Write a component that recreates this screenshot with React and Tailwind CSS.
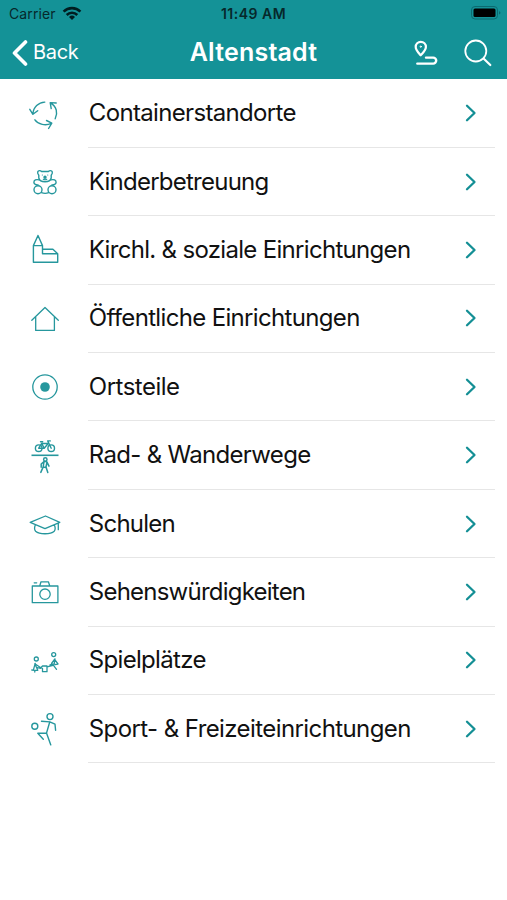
const rows = [
  { label: "Containerstandorte", icon: ContainerIcon, tracking: "tracking-[-0.66px]" },
  { label: "Kinderbetreuung", icon: BearIcon, tracking: "tracking-[-0.76px]" },
  { label: "Kirchl. & soziale Einrichtungen", icon: ChurchIcon, tracking: "tracking-[-0.69px]" },
  { label: "Öffentliche Einrichtungen", icon: HouseIcon, tracking: "tracking-[-0.66px]" },
  { label: "Ortsteile", icon: DistrictIcon, tracking: "tracking-[-0.5px]" },
  { label: "Rad- & Wanderwege", icon: TrailIcon, tracking: "tracking-[-0.69px]" },
  { label: "Schulen", icon: SchoolIcon, tracking: "tracking-[-0.75px]" },
  { label: "Sehenswürdigkeiten", icon: CameraIcon, tracking: "tracking-[-0.77px]" },
  { label: "Spielplätze", icon: PlaygroundIcon, tracking: "tracking-[-0.68px]" },
  { label: "Sport- & Freizeiteinrichtungen", icon: SportIcon, tracking: "tracking-[-0.59px]" },
];

function Icon({ children }) {
  return (
    <svg
      viewBox="0 0 50 50"
      className="ml-5 h-[50px] w-[50px] shrink-0 text-[#26979d]"
      fill="none"
      stroke="currentColor"
      strokeWidth="1.4"
      strokeLinecap="round"
      strokeLinejoin="round"
    >
      {children}
    </svg>
  );
}

function ContainerIcon() {
  return (
    <Icon>
      <path d="M24.8 13.1C18.5 13.500 13.300 18 12.900 25.100M9.800 20.300l3.100 5 4.800-3.600" />
      <path d="M35.200 29.800C38.200 24 36.500 17.300 30.600 14.200M36.200 14l-6-.4 1 6" />
      <path d="M14.900 30.800C18.200 35.500 25.500 37 31.300 34.400M26.500 31.500l5.300 2.600-3.200 5.400" />
    </Icon>
  );
}

function BearIcon() {
  return (
    <Icon>
      <path d="M18.800 18.200c-2-2.400-1.200-4.600.8-4.600 1.200 0 2 .9 2 .9h6.800s.8-.9 2-.9c2 0 2.800 2.200.8 4.600v2.800c-.6 2.400-2.800 3.800-6.200 3.800s-5.600-1.400-6.200-3.800z" />
      <path d="M19 22.900c-2.800-.8-5.200.2-5.100 2.500.1 2 2.200 2.600 4.200 2.500M31 22.900c2.800-.8 5.200.2 5.100 2.500-.1 2-2.200 2.600-4.200 2.500M21.500 35.700c2 .8 5.200.8 7.200 0" />
      <circle cx="18" cy="32.700" r="4" />
      <circle cx="32" cy="32.700" r="4" />
      <path strokeWidth="1.100" d="M22.300 18h.1M27.700 18h.1M23.300 22.300q1.800 1 3.500 0" />
      <circle cx="25" cy="20.200" r="1" fill="currentColor" />
    </Icon>
  );
}

function ChurchIcon() {
  return (
    <Icon>
      <path d="M13.400 20.600v16.600h24.300v-8.400l-4.800-4.500H22.500v-3.700L18 10.500l-4.600 10.100h9M22.500 24.300v4.500h15.200" />
    </Icon>
  );
}

function HouseIcon() {
  return (
    <Icon>
      <path strokeWidth="1.300" d="M11.800 26.300 25 13.500l13.300 12.800M15.700 22.800v13.600h18.700V22.800" />
    </Icon>
  );
}

function DistrictIcon() {
  return (
    <Icon>
      <circle cx="25" cy="25" r="12.200" strokeWidth="1.300" />
      <circle cx="25" cy="25" r="4.800" fill="currentColor" stroke="none" />
    </Icon>
  );
}

function TrailIcon() {
  return (
    <Icon>
      <g strokeWidth="1.400">
        <circle cx="18.700" cy="17.200" r="3.300" />
        <circle cx="31.200" cy="17.200" r="3.300" />
        <path d="M18.700 17.200l3-4.700h6.500l-4 4.700h-5.500M20.500 10.800h2.200M24.200 17.200l-2.500-4.700M31.200 17.200l-3.500-7.300h2.600" />
      </g>
      <path strokeWidth="1.600" strokeLinecap="butt" d="M11.500 24.300h27" />
      <g strokeWidth="1.500">
        <circle cx="25.300" cy="28.500" r="1.700" />
        <path d="M24 30.700l-2.800 2.300v3.200M24 30.700l-.8 5.200-2.400 5.500M27 31l-1 5 1.800 5.500M24 30.700q2.200-.8 3 .5l2 4M23.200 36l2.800.4" />
      </g>
    </Icon>
  );
}

function SchoolIcon() {
  return (
    <Icon>
      <path strokeWidth="1.300" d="M10.200 23.400 25.500 17l14.300 6.300-14.800 6.300zM15.300 26c-.9 2.300-1 4.800.3 6.300 3.800 3.300 15 3.300 18.600 0 1.300-1.500 1.100-4 .2-6.300M38.300 24.200v6.500" />
    </Icon>
  );
}

function CameraIcon() {
  return (
    <Icon>
      <path strokeWidth="1.300" d="M12.300 19h25.600v16.700H12.300zM19.800 18.800l1.200-4h7.400l1.300 4M14.200 15.800h2.500" />
      <circle cx="25" cy="27.200" r="5.200" strokeWidth="1.300" />
    </Icon>
  );
}

function PlaygroundIcon() {
  return (
    <Icon>
      <g strokeWidth="1.300">
        <circle cx="16.300" cy="23" r="2" />
        <circle cx="33.700" cy="18.600" r="2" />
        <path d="M15.200 27.300l-1.900 7h4.500l-3-6.500 5.700 3.700M11.800 34l3 .3v1.800M17 31.600l4 .8M20.500 32.300l2-2.300h4.500v5.700h-4.500v-3.400M27 30.800l6-1.500M35 23l-.8 4.800-4.200 1M34.500 23.300l-3 4.200M35 23.800l3 4.200-3 .7M33.500 29.300l3 4" />
      </g>
    </Icon>
  );
}

function SportIcon() {
  return (
    <Icon>
      <circle cx="30" cy="12.600" r="3" />
      <circle cx="14.800" cy="22.200" r="3" />
      <path d="M21.500 17.300l8.300.6 5.200 2.300.6 6M29.800 17.800l-3.300 11.300 4.300 11.800M26.500 29.300h-8.700l5.500 6" />
    </Icon>
  );
}

function StatusBar() {
  return (
    <div className="grid h-[27px] grid-cols-3 items-center text-[14px] leading-[27px] text-[#06282b]">
      <div className="flex items-center gap-[6px] pl-[9px]">
        <span className="tracking-[0.1px]">Carrier</span>
        <svg viewBox="0 0 20 15" className="-mt-px h-[15px] w-[20px]" fill="none" stroke="#001d20" strokeWidth="2.600">
          <path d="M1.600 5.600a12 12 0 0 1 16.800 0M4.700 9a7.500 7.500 0 0 1 10.600 0" />
          <path d="M10 14l-3-3a4.300 4.300 0 0 1 6 0z" fill="#001d20" stroke="none" />
        </svg>
      </div>
      <span className="text-center font-semibold tracking-[0.5px]">11:49 AM</span>
      <svg viewBox="0 0 32 16" className="-mt-px mr-[5px] h-[16px] w-[32px] justify-self-end">
        <rect x="1.500" y="1.500" width="26" height="12.500" rx="3.500" fill="none" stroke="#0b6a70" />
        <rect x="3.500" y="3.500" width="22" height="8.500" rx="1.500" />
        <path d="M29 6v3.500q3-1.700 0-3.500" fill="#0b6a70" />
      </svg>
    </div>
  );
}

function NavBar() {
  return (
    <div className="grid h-[52px] grid-cols-[1fr_auto_1fr] items-center text-white">
      <button className="flex items-center gap-[5px] pl-[11px] text-[20px]">
        <svg viewBox="0 0 17 28" className="-mt-px h-[28px] w-[17px]" fill="none" stroke="currentColor" strokeWidth="3.600" strokeLinecap="round" strokeLinejoin="round">
          <path d="M14.500 3 3.500 14l11 11" />
        </svg>
        <span className="-mt-[2px] tracking-[-0.3px]">Back</span>
      </button>
      <h1 className="text-[25px] font-semibold tracking-[0.2px]">Altenstadt</h1>
      <div className="flex justify-end gap-[26px] pr-[15px]">
        <svg viewBox="0 0 26 28" className="h-[28px] w-[26px]" fill="none" stroke="currentColor" strokeWidth="2.200" strokeLinecap="round" strokeLinejoin="round">
          <path d="M8.700 16.300C6.500 13.700 3.700 11 3.700 7.900a5.100 5.100 0 0 1 10.200 0c0 3.100-2.900 5.800-5.200 8.400z" />
          <circle cx="8.700" cy="7.700" r=".6" strokeWidth="1" />
          <path strokeWidth="2.400" d="M14 18.600h7.200a3 3 0 0 1 0 6H5.300" />
        </svg>
        <svg viewBox="0 0 28 28" className="h-[28px] w-[28px]" fill="none" stroke="currentColor" strokeWidth="1.800" strokeLinecap="round">
          <circle cx="11.800" cy="12" r="10.500" />
          <path strokeWidth="2.200" d="m19.800 19.800 6.500 6.200" />
        </svg>
      </div>
    </div>
  );
}

function App() {
  return (
    <div className="h-[900px] w-[507px] overflow-hidden bg-white font-['Inter',sans-serif]">
      <header className="h-[79px] bg-[#149297]">
        <StatusBar />
        <NavBar />
      </header>
      <ul className="pt-[0.5px]">
        {rows.map(({ label, icon: RowIcon, tracking }) => (
          <li key={label} className="flex h-[68.4px] items-center">
            <RowIcon />
            <div className="ml-[18px] mr-[12px] flex h-full flex-1 items-center justify-between border-b border-[#e6e6e6] pr-[18.5px] pl-[0.8px]">
              <span className={`whitespace-nowrap text-[24px] text-[#111] ${tracking}`}>{label}</span>
              <svg viewBox="0 0 12 18" className="h-[18px] w-[12px]" fill="none" stroke="#148f95" strokeWidth="2.300" strokeLinecap="round" strokeLinejoin="round">
                <path d="m2 1.700 7.500 7.300L2 16.300" />
              </svg>
            </div>
          </li>
        ))}
      </ul>
    </div>
  );
}

export default App;
